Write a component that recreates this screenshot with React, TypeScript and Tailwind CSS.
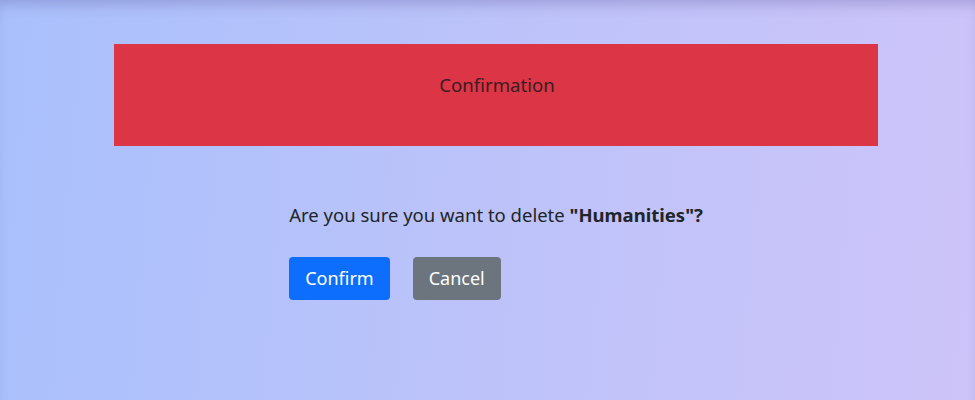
import React from 'react';

const App: React.FC = () => {
  return (
    <div className="min-h-[400px] w-full bg-[linear-gradient(95deg,#a9c0fc_0%,#bec3f9_55%,#cdc4f9_100%)] shadow-[inset_0_10px_14px_-6px_rgba(80,70,140,0.3)] font-['Noto_Sans','Open_Sans',sans-serif] text-[#212529]">
      <div className="w-[764px] ml-[114px] pt-[44px]">
        {/* Header banner */}
        <div className="h-[102px] bg-[#dc3545] flex justify-center pt-[27px]">
          <h2 className="text-[18.6px] leading-[27px] text-[#3b1c22] ml-[2px]">Confirmation</h2>
        </div>

        {/* Body */}
        <div className="w-fit mx-auto mt-[55px]">
          <p className="text-[18.5px] leading-[27px]">
            Are you sure you want to delete <strong className="font-bold">"Humanities"?</strong>
          </p>
          <div className="flex gap-[23px] mt-[29px]">
            <button className="h-[43px] px-[16px] rounded-[4px] bg-[#0d6efd] text-white text-[18px]">
              Confirm
            </button>
            <button className="h-[43px] px-[16px] rounded-[4px] bg-[#6c757d] text-white text-[18px]">
              Cancel
            </button>
          </div>
        </div>
      </div>
    </div>
  );
};

export default App;
